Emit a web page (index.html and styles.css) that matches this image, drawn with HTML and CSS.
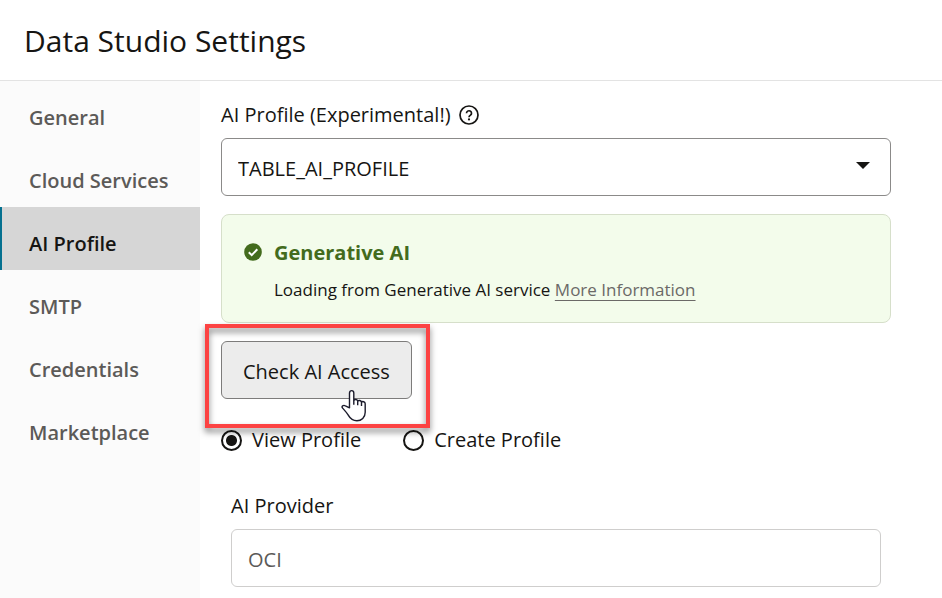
FILE: index.html
```html
<!DOCTYPE html>
<html lang="en">
<head>
<meta charset="utf-8">
<meta name="viewport" content="width=device-width, initial-scale=1">
<title>Data Studio Settings</title>
<link rel="stylesheet" href="styles.css">
</head>
<body>
<header class="header"><h1 class="title">Data Studio Settings</h1></header>
<div class="layout">
  <nav class="sidebar" aria-label="Settings">
    <a class="nav-item" href="#general">General</a>
    <a class="nav-item" href="#cloud">Cloud Services</a>
    <a class="nav-item active" href="#ai" aria-current="page">AI Profile</a>
    <a class="nav-item" href="#smtp">SMTP</a>
    <a class="nav-item" href="#credentials">Credentials</a>
    <a class="nav-item" href="#marketplace">Marketplace</a>
  </nav>
  <main class="content">
    <div class="field">
      <div class="label-row">
        <label class="label" for="profile">AI Profile (Experimental!)</label>
        <svg class="help" viewBox="0 0 20 20" aria-hidden="true"><circle cx="10" cy="10" r="9"/><path d="M7.500 8.200a2.500 2.400 0 1 1 4 1.900c-1 .7-1.500 1.100-1.500 2.100"/><circle class="dot" cx="10" cy="14.400" r="1.100"/></svg>
      </div>
      <div class="select-wrap">
        <select class="control" id="profile"><option>TABLE_AI_PROFILE</option></select>
        <svg class="caret" viewBox="0 0 14 7" aria-hidden="true"><path d="M0 0h14L7 7z"/></svg>
      </div>
    </div>
    <section class="alert">
      <svg class="check" viewBox="0 0 18 18" aria-hidden="true"><circle cx="9" cy="9" r="8.8"/><path d="M4.8 9.2l2.9 2.9 5.6-5.8"/></svg>
      <div class="alert-body">
        <h2 class="alert-title">Generative AI</h2>
        <p class="alert-text">Loading from Generative AI service <a class="more" href="#more">More Information</a></p>
      </div>
    </section>
    <div class="action">
      <button class="button" type="button">Check AI Access</button>
      <div class="highlight"></div>
      <svg class="pointer" viewBox="0 0 26 33" aria-hidden="true"><path d="M8.5 18.8V4.2c0-3.4 4.3-3.4 4.3 0v7.3c.6-1.5 3.7-1.3 3.9.7.8-1.3 3.6-.9 3.8 1 .9-1.1 3.7-.7 3.7 1.6v8.400c0 5.300-3.700 8.600-8.300 8.600-4.100 0-6.600-2-8.300-5.100-1.600-2.900-3.800-5.200-6-7.600-1.700-1.900.8-3.400 2.800-2.300z"/><path d="M12.800 11.500v4.300M16.700 12.200v4M20.500 13.200v3.800"/></svg>
    </div>
    <div class="radios" role="radiogroup" aria-label="Profile mode">
      <label class="radio"><input type="radio" name="mode" checked><span>View Profile</span></label>
      <label class="radio"><input type="radio" name="mode"><span>Create Profile</span></label>
    </div>
    <div class="field details">
      <label class="label" for="provider">AI Provider</label>
      <input class="control readonly" id="provider" type="text" value="OCI" readonly>
    </div>
  </main>
</div>
</body>
</html>
```
FILE: styles.css
```css
* { box-sizing: border-box; }

body {
  display: flex;
  flex-direction: column;
  min-height: 100vh;
  margin: 0;
  background: #fff;
  color: #161513;
  font: 20px/30px "Open Sans", "Noto Sans", sans-serif;
}

.header {
  padding: 19px 24px 17px;
  border-bottom: 1px solid #e3e3e3;
}

.title {
  margin: 0;
  font-size: 30px;
  font-weight: 400;
  line-height: 44px;
}

.layout {
  display: flex;
  flex: 1;
}

.sidebar {
  flex: 0 0 200px;
  background: #fbfbfb;
}

.nav-item {
  display: block;
  padding: 22px 27px 11px;
  border-left: 2px solid transparent;
  color: #5c5a58;
  font-weight: 600;
  text-decoration: none;
}

.nav-item.active {
  border-color: #04708f;
  background: #d6d6d6;
  color: #161513;
}

.content {
  flex: 1;
  min-width: 0;
  padding: 19px 51px 11px 21px;
}

.field {
  display: flex;
  flex-direction: column;
  gap: 8px;
}

.label-row {
  display: flex;
  align-items: center;
  gap: 8px;
}

.help {
  width: 20px;
  height: 20px;
  fill: none;
  stroke: #161513;
  stroke-width: 1.7;
}

.help .dot {
  fill: #161513;
  stroke: none;
}

.select-wrap {
  position: relative;
}

.control {
  display: block;
  width: 100%;
  height: 58px;
  margin: 0;
  padding: 4px 16px 0;
  border: 1px solid #8b8a89;
  border-radius: 6px;
  appearance: none;
  background: #fff;
  color: #161513;
  font: inherit;
}

.readonly {
  padding-top: 2px;
  border-color: #cfcecd;
  color: #5c5a58;
}

.caret {
  position: absolute;
  top: 24px;
  right: 21px;
  width: 14px;
  height: 7px;
  fill: #161513;
  pointer-events: none;
}

.alert {
  display: flex;
  gap: 12px;
  margin: 18px 0;
  padding: 23px 22px 18px;
  border: 1px solid #d6dfca;
  border-radius: 8px;
  background: #f3fceb;
}

.check {
  flex: none;
  width: 18px;
  height: 18px;
  margin-top: 5px;
  fill: #436b1d;
}

.check path {
  fill: none;
  stroke: #fff;
  stroke-width: 2;
}

.alert-title {
  margin: 0 0 8px;
  color: #436b1d;
  font-size: 20px;
  font-weight: 700;
}

.alert-text {
  margin: 0;
  font-size: 17px;
  line-height: 28px;
}

.more {
  color: #6b6967;
  text-decoration: underline 1px;
  text-decoration-skip-ink: none;
  text-underline-offset: 4px;
}

.action {
  position: relative;
  width: fit-content;
}

.button {
  display: block;
  height: 58px;
  padding: 4px 21px 0;
  border: 1px solid #7d7c7b;
  border-radius: 6px;
  background: #ececec;
  color: #161513;
  font: inherit;
}

.highlight {
  position: absolute;
  inset: -17px -18px -29px -16px;
  border: 4px solid #fc4343;
  filter: drop-shadow(0 4px 3px rgba(0, 0, 0, 0.5));
  pointer-events: none;
}

.pointer {
  position: absolute;
  right: 45px;
  bottom: -23px;
  width: 26px;
  height: 33px;
  fill: #fff;
  stroke: #1b1b2b;
  stroke-width: 1.4;
  stroke-linejoin: round;
  pointer-events: none;
}

.radios {
  display: flex;
  gap: 42px;
  margin: 26px 0 36px;
}

.radio {
  display: flex;
  align-items: center;
  gap: 10px;
}

.radio input {
  width: 21px;
  height: 21px;
  margin: 0;
  border: 2px solid #161513;
  border-radius: 50%;
  appearance: none;
  background: #fff;
}

.radio input:checked {
  background: radial-gradient(circle, #161513 5px, #fff 6px);
}

.details {
  padding: 0 10px;
}
```
